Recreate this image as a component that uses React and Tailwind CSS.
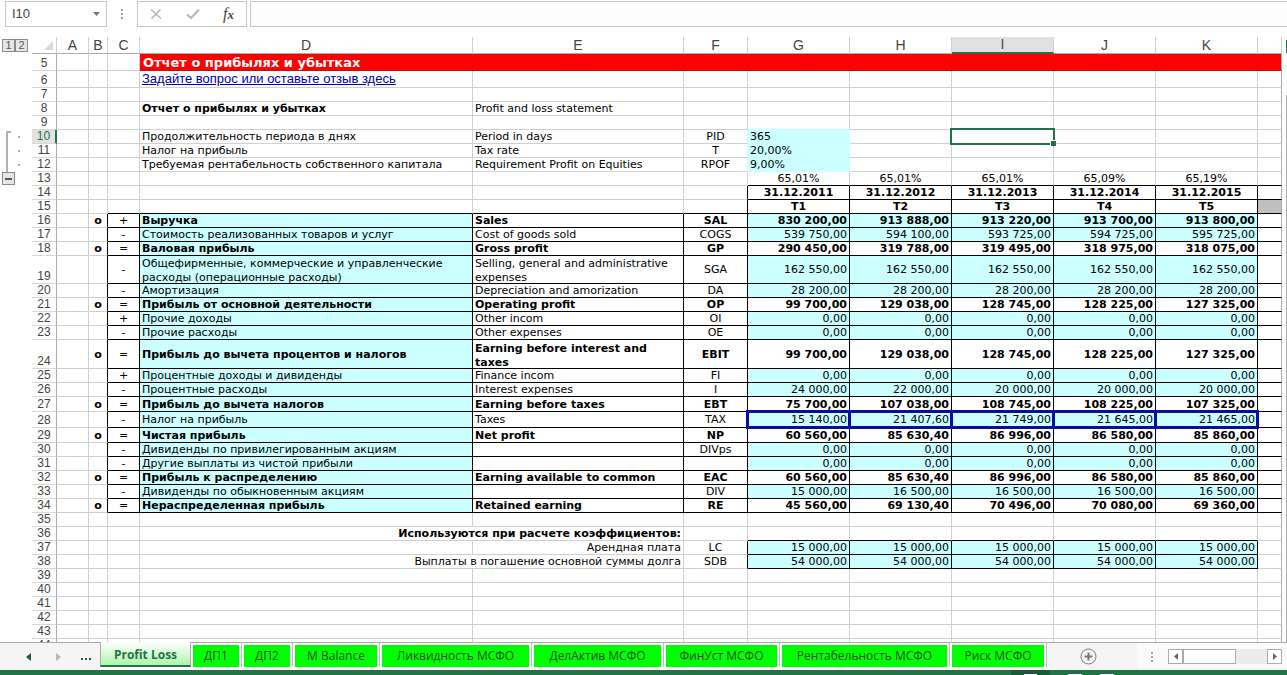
import clsx from 'clsx';

const COLUMNS = [
    { id: 'A', width: 'w-[32px]' },
    { id: 'B', width: 'w-[19px]' },
    { id: 'C', width: 'w-[32px]' },
    { id: 'D', width: 'w-[333px]' },
    { id: 'E', width: 'w-[211px]' },
    { id: 'F', width: 'w-[64px]' },
    { id: 'G', width: 'w-[102px]' },
    { id: 'H', width: 'w-[102px]' },
    { id: 'I', width: 'w-[102px]' },
    { id: 'J', width: 'w-[102px]' },
    { id: 'K', width: 'w-[102px]' },
    { id: 'L', width: '' },
];

const YEARS = ['G', 'H', 'I', 'J', 'K'];

// n: row number, s: sign, d / e: names, f: code, v: values for G..K
const ROWS = [
    { n: 5, h: 'h-[17px]' },
    { n: 6, h: 'h-[17px]' },
    { n: 7 },
    { n: 8, d: 'Отчет о прибылях и убытках', e: 'Profit and loss statement' },
    { n: 9 },
    { n: 10, d: 'Продолжительность периода в днях', e: 'Period in days', f: 'PID', v: ['365'] },
    { n: 11, d: 'Налог на прибыль', e: 'Tax rate', f: 'T', v: ['20,00%'] },
    { n: 12, d: 'Требуемая рентабельность собственного капитала', e: 'Requirement Profit on Equities', f: 'RPOF', v: ['9,00%'] },
    { n: 13, v: ['65,01%', '65,01%', '65,01%', '65,09%', '65,19%'] },
    { n: 14, bold: true, v: ['31.12.2011', '31.12.2012', '31.12.2013', '31.12.2014', '31.12.2015'] },
    { n: 15, bold: true, v: ['T1', 'T2', 'T3', 'T4', 'T5'] },
    { n: 16, bold: true, s: '+', d: 'Выручка', e: 'Sales', f: 'SAL', v: ['830 200,00', '913 888,00', '913 220,00', '913 700,00', '913 800,00'] },
    { n: 17, s: '-', d: 'Стоимость реализованных товаров и услуг', e: 'Cost of goods sold', f: 'COGS', v: ['539 750,00', '594 100,00', '593 725,00', '594 725,00', '595 725,00'] },
    { n: 18, bold: true, s: '=', d: 'Валовая прибыль', e: 'Gross profit', f: 'GP', v: ['290 450,00', '319 788,00', '319 495,00', '318 975,00', '318 075,00'] },
    { n: 19, h: 'h-[28px]', s: '-', d: 'Общефирменные, коммерческие и управленческие\nрасходы (операционные расходы)', e: 'Selling, general and administrative\nexpenses', f: 'SGA', v: ['162 550,00', '162 550,00', '162 550,00', '162 550,00', '162 550,00'] },
    { n: 20, s: '-', d: 'Амортизация', e: 'Depreciation and amorization', f: 'DA', v: ['28 200,00', '28 200,00', '28 200,00', '28 200,00', '28 200,00'] },
    { n: 21, bold: true, s: '=', d: 'Прибыль от основной деятельности', e: 'Operating profit', f: 'OP', v: ['99 700,00', '129 038,00', '128 745,00', '128 225,00', '127 325,00'] },
    { n: 22, s: '+', d: 'Прочие доходы', e: 'Other incom', f: 'OI', v: ['0,00', '0,00', '0,00', '0,00', '0,00'] },
    { n: 23, s: '-', d: 'Прочие расходы', e: 'Other expenses', f: 'OE', v: ['0,00', '0,00', '0,00', '0,00', '0,00'] },
    { n: 24, h: 'h-[29px]', bold: true, s: '=', d: 'Прибыль до вычета процентов и налогов', e: 'Earning before interest and\ntaxes', f: 'EBIT', v: ['99 700,00', '129 038,00', '128 745,00', '128 225,00', '127 325,00'] },
    { n: 25, s: '+', d: 'Процентные доходы и дивиденды', e: 'Finance incom', f: 'FI', v: ['0,00', '0,00', '0,00', '0,00', '0,00'] },
    { n: 26, s: '-', d: 'Процентные расходы', e: 'Interest expenses', f: 'I', v: ['24 000,00', '22 000,00', '20 000,00', '20 000,00', '20 000,00'] },
    { n: 27, h: 'h-[15px]', bold: true, s: '=', d: 'Прибыль до вычета налогов', e: 'Earning before taxes', f: 'EBT', v: ['75 700,00', '107 038,00', '108 745,00', '108 225,00', '107 325,00'] },
    { n: 28, h: 'h-[16px]', s: '-', d: 'Налог на прибыль', e: 'Taxes', f: 'TAX', v: ['15 140,00', '21 407,60', '21 749,00', '21 645,00', '21 465,00'] },
    { n: 29, h: 'h-[15px]', bold: true, s: '=', d: 'Чистая прибыль', e: 'Net profit', f: 'NP', v: ['60 560,00', '85 630,40', '86 996,00', '86 580,00', '85 860,00'] },
    { n: 30, s: '-', d: 'Дивиденды по привилегированным акциям', f: 'DIVps', v: ['0,00', '0,00', '0,00', '0,00', '0,00'] },
    { n: 31, s: '-', d: 'Другие выплаты из чистой прибыли', v: ['0,00', '0,00', '0,00', '0,00', '0,00'] },
    { n: 32, bold: true, s: '=', d: 'Прибыль к распределению', e: 'Earning available to common', f: 'EAC', v: ['60 560,00', '85 630,40', '86 996,00', '86 580,00', '85 860,00'] },
    { n: 33, s: '-', d: 'Дивиденды по обыкновенным акциям', f: 'DIV', v: ['15 000,00', '16 500,00', '16 500,00', '16 500,00', '16 500,00'] },
    { n: 34, bold: true, s: '=', d: 'Нераспределенная прибыль', e: 'Retained earning', f: 'RE', v: ['45 560,00', '69 130,40', '70 496,00', '70 080,00', '69 360,00'] },
    { n: 35 },
    { n: 36, wide: 'Используются при расчете коэффициентов:' },
    { n: 37, e: 'Арендная плата', f: 'LC', v: ['15 000,00', '15 000,00', '15 000,00', '15 000,00', '15 000,00'] },
    { n: 38, wide: 'Выплаты в погашение основной суммы долга', f: 'SDB', v: ['54 000,00', '54 000,00', '54 000,00', '54 000,00', '54 000,00'] },
    { n: 39 },
    { n: 40 },
    { n: 41 },
    { n: 42 },
    { n: 43 },
    { n: 44 },
];

const TABS = [
    { name: 'ДП1', width: 'w-[46px]' },
    { name: 'ДП2', width: 'w-[46px]' },
    { name: 'M Balance', width: 'w-[82px]' },
    { name: 'Ликвидность МСФО', width: 'w-[147px]' },
    { name: 'ДелАктив МСФО', width: 'w-[127px]' },
    { name: 'ФинУст МСФО', width: 'w-[111px]' },
    { name: 'Рентабельность МСФО', width: 'w-[165px]' },
    { name: 'Риск МСФО', width: 'w-[92px]' },
];

const between = (n, a, b) => n >= a && n <= b;

function cellText(row, col) {
    if (col === 'B') return row.bold && between(row.n, 16, 34) ? 'o' : '';
    if (col === 'C') return row.s;
    if (col === 'D') return row.d;
    if (col === 'E') return row.e;
    if (col === 'F') return row.f;
    return row.v?.[YEARS.indexOf(col)];
}

function isFilled(row, col) {
    const { n } = row;
    if (between(n, 10, 12)) return col === 'G';
    if (between(n, 16, 34)) return col === 'D' || (YEARS.includes(col) && (n === 16 || !row.bold));
    return between(n, 37, 38) && YEARS.includes(col);
}

function isBold(row, col) {
    if (row.n === 8) return col === 'D';
    if (row.n === 36) return true;
    return row.bold && col !== 'C';
}

function rightLine({ n }, col) {
    const isYear = YEARS.includes(col);
    if (between(n, 10, 12) && (col === 'F' || col === 'G')) return 'border-r-[#ccffff]';
    if (between(n, 16, 34) && col !== 'A' && col !== 'L') return 'border-r-black';
    if ((between(n, 14, 15) || between(n, 37, 38)) && (isYear || col === 'F')) return 'border-r-black';
    if (between(n, 37, 38) && col === 'E') return 'border-r-[#d0d0d0]';
    if (col === 'L') return 'border-r-[#ababab]';
    return 'border-r-[#d0d0d0]';
}

function bottomLine({ n }, col) {
    const isYear = YEARS.includes(col);
    if (between(n, 9, 12) && col === 'G') return 'border-b-[#ccffff]';
    if (between(n, 13, 14) && (isYear || col === 'L')) return 'border-b-black';
    if (between(n, 15, 34) && col !== 'A' && col !== 'B') return 'border-b-black';
    if (between(n, 36, 38) && isYear) return 'border-b-black';
    return 'border-b-[#d0d0d0]';
}

function alignment({ n }, col) {
    if (col === 'D') return 'text-left';
    if (col === 'E') return n === 37 ? 'text-right' : 'text-left';
    if (YEARS.includes(col)) {
        if (between(n, 10, 12)) return 'text-left';
        return n >= 16 ? 'text-right' : 'text-center';
    }
    return 'text-center';
}

function Cell({ row, col, span, children }) {
    return (
        <td
            colSpan={span}
            className={clsx(
                'relative border-r border-b px-[2px] pt-px pb-0 align-middle whitespace-pre',
                rightLine(row, col),
                bottomLine(row, col),
                span ? 'text-right' : alignment(row, col),
                isBold(row, col) && 'font-bold',
                isFilled(row, col) && 'bg-[#ccffff]',
                row.n === 15 && col === 'L' && 'bg-[#c0c0c0]',
            )}
        >
            {children}
            {row.n === 28 && YEARS.includes(col) && (
                <span className="absolute -inset-[2px] z-10 border-[3px] border-[#0a0aa8]"></span>
            )}
            {row.n === 10 && col === 'I' && (
                <span className="absolute -inset-[2px] z-10 border-2 border-[#217346]">
                    <span className="absolute -right-[3px] -bottom-[3px] size-[6px] border-t border-l border-white bg-[#217346]"></span>
                </span>
            )}
        </td>
    );
}

function Row({ row }) {
    const active = row.n === 10;
    let cols = COLUMNS.map((c) => c.id);
    if (row.n === 5) cols = ['A', 'B', 'C'];
    if (row.wide) cols = cols.filter((c) => c !== 'E');

    return (
        <tr className={row.h || 'h-[14px]'}>
            <th
                scope="row"
                className={clsx(
                    'border-r border-b border-b-[#d8d8d8] p-0 pb-px text-center align-bottom font-["Liberation_Sans",sans-serif] text-[12px] leading-[12px] font-normal',
                    active ? 'border-r-2 border-r-[#217346] bg-[#e1e1e1] text-[#217346]' : 'border-r-[#ababab] text-[#444]',
                )}
            >
                {row.n}
            </th>
            {cols.map((col) => {
                const text = cellText(row, col);
                if (row.wide && col === 'D') return <Cell key={col} row={row} col="E" span={2}>{row.wide}</Cell>;
                if (row.n === 6 && col === 'D') {
                    return (
                        <Cell key={col} row={row} col={col}>
                            <a href="#feedback" className='font-["Liberation_Sans",sans-serif] text-[13px] text-[#0000a8] underline'>
                                Задайте вопрос или оставьте отзыв здесь
                            </a>
                        </Cell>
                    );
                }
                if (text?.includes('\n')) {
                    return (
                        <Cell key={col} row={row} col={col}>
                            <div className="h-[26px] leading-[14px]">{text}</div>
                        </Cell>
                    );
                }
                return <Cell key={col} row={row} col={col}>{text}</Cell>;
            })}
            {row.n === 5 && (
                <td colSpan={9} className="border-r border-b border-r-[#ababab] border-b-[#c01020] bg-[#ff0000] px-[3px] pt-px pb-0 text-[13px] leading-[15px] font-bold text-white">
                    Отчет о прибылях и убытках
                </td>
            )}
        </tr>
    );
}

function Dots() {
    return (
        <span className="flex flex-col gap-[2px]">
            <span className="size-[2px] bg-[#a0a0a0]"></span>
            <span className="size-[2px] bg-[#a0a0a0]"></span>
            <span className="size-[2px] bg-[#a0a0a0]"></span>
        </span>
    );
}

function FormulaBar() {
    return (
        <div className="flex h-[37px] shrink-0 items-start pt-px pl-[5px] text-[#444]">
            <div className="flex h-[26px] w-[102px] items-center border border-[#c6c6c6] pr-[5px]">
                <input aria-label="Name box" defaultValue="I10" className="w-full min-w-0 pl-[6px] text-[13px] outline-none" />
                <button aria-label="Open names">
                    <svg width="9" height="5" viewBox="0 0 9 5" fill="#777"><path d="M1 0H8L4.500 4Z" /></svg>
                </button>
            </div>
            <div className="flex h-[26px] w-[30px] items-center justify-center">
                <Dots />
            </div>
            <div className="mr-[3px] flex h-[26px] w-[110px] items-center justify-between border border-[#c6c6c6] px-[12px]">
                <button aria-label="Cancel">
                    <svg width="12" height="12" viewBox="0 0 12 12" fill="none" stroke="#b8b8b8" strokeWidth="1.6"><path d="M1 1.500L11 10.500M10.500 1.500L1.500 10.500" /></svg>
                </button>
                <button aria-label="Enter">
                    <svg width="14" height="12" viewBox="0 0 14 12" fill="none" stroke="#b8b8b8" strokeWidth="2.2"><path d="M1 6.500L5 10L13 1.500" /></svg>
                </button>
                <button aria-label="Insert function" className='font-["Liberation_Serif",serif] text-[16px] leading-[20px] italic'>
                    f<span className="text-[13px] font-bold">x</span>
                </button>
            </div>
            <input aria-label="Formula" className="h-[26px] min-w-0 flex-1 border border-r-0 border-[#c6c6c6] bg-[#fdfdfd] px-1 text-[13px] outline-none" />
        </div>
    );
}

function Outline() {
    return (
        <div className="w-[32px] shrink-0 pt-[2px] pl-[2px]">
            <div className="flex">
                {['1', '2'].map((level) => (
                    <button key={level} className="size-[13px] border border-[#8a8a8a] bg-[#e6e6e6] text-[11px] leading-[11px] text-[#555]">
                        {level}
                    </button>
                ))}
            </div>
            <div className="mt-[79px] flex h-[41px] pl-[4px]">
                <div className="w-[5px] border-t-2 border-l-2 border-[#b0b0b0]"></div>
                <div className="flex flex-col gap-[12px] pt-[5px] pl-[7px]">
                    <span className="size-[2px] bg-[#b0b0b0]"></span>
                    <span className="size-[2px] bg-[#b0b0b0]"></span>
                    <span className="size-[2px] bg-[#b0b0b0]"></span>
                </div>
            </div>
            <button aria-label="Collapse rows" className="flex size-[13px] items-center justify-center border border-[#8a8a8a] bg-[#e6e6e6]">
                <span className="h-[2px] w-[7px] bg-[#555]"></span>
            </button>
        </div>
    );
}

function Sheet() {
    return (
        <table className='w-full table-fixed border-separate border-spacing-0 font-["DejaVu_Sans",Verdana,sans-serif] text-[11px] leading-[12px] text-black'>
            <colgroup>
                <col className="w-[25px]" />
                {COLUMNS.map((c) => <col key={c.id} className={c.width} />)}
            </colgroup>
            <thead>
                <tr className='h-[17px] font-["Liberation_Sans",sans-serif] text-[14px] leading-[15px] text-[#444]'>
                    <td className="border-r border-b border-r-[#d0d0d0] border-b-[#ababab] p-0">
                        <svg className="ml-auto mr-[3px]" width="9" height="9" viewBox="0 0 9 9" fill="#d8d8d8"><path d="M9 0V9H0Z" /></svg>
                    </td>
                    {COLUMNS.map(({ id }) => (
                        <th
                            key={id}
                            scope="col"
                            className={clsx(
                                'border-r border-r-[#d0d0d0] p-0 font-normal',
                                id === 'I' ? 'border-b-2 border-b-[#217346] bg-[#e1e1e1]' : 'border-b border-b-[#ababab]',
                            )}
                        >
                            {id === 'L' ? '' : id}
                        </th>
                    ))}
                </tr>
            </thead>
            <tbody>
                {ROWS.map((row) => <Row key={row.n} row={row} />)}
            </tbody>
        </table>
    );
}

function SheetTabs() {
    return (
        <div className='flex h-[28px] shrink-0 border-t border-[#ababab] bg-[#f5f5f5] font-["Open_Sans",sans-serif] text-[12px] text-[#1d4d1d]'>
            <div className="flex w-[100px] items-center pl-[26px]">
                <button aria-label="Previous sheets">
                    <svg width="5" height="8" viewBox="0 0 5 8" fill="#1e5c3a"><path d="M5 0V8L0 4Z" /></svg>
                </button>
                <button aria-label="Next sheets" className="ml-[25px]">
                    <svg width="5" height="8" viewBox="0 0 5 8" fill="#b8b8b8"><path d="M0 0V8L5 4Z" /></svg>
                </button>
                <button aria-label="More sheets" className="ml-[20px] flex gap-[2px] pt-[4px]">
                    <span className="size-[2px] bg-[#1e5c3a]"></span>
                    <span className="size-[2px] bg-[#1e5c3a]"></span>
                    <span className="size-[2px] bg-[#1e5c3a]"></span>
                </button>
            </div>
            <div className="flex items-start bg-white">
                <button className="-mt-px h-[25px] w-[91px] border-x border-b-2 border-x-[#ababab] border-b-[#217346] bg-linear-to-b from-white to-[#a9f5a9] pt-[3px] font-bold text-[#217346]">
                    Profit Loss
                </button>
                {TABS.map((tab) => (
                    <div key={tab.name} className="flex items-center border-r border-[#b8c8b8] px-[2px] pt-[2px]">
                        <button className={clsx('h-[22px] bg-[#00ff00]', tab.width)}>{tab.name}</button>
                    </div>
                ))}
            </div>
            <div className="flex w-[90px] items-center justify-center pr-[8px]">
                <button aria-label="New sheet">
                    <svg width="17" height="17" viewBox="0 0 17 17" fill="none" stroke="#777"><circle cx="8.500" cy="8.500" r="7.500" /><path d="M8.500 4.500V12.500M4.500 8.500H12.500" strokeWidth="2" /></svg>
                </button>
            </div>
            <div className="flex flex-1 items-center justify-end bg-[#fafafa] pr-[5px]">
                <Dots />
                <div className="ml-[15px] flex h-[15px] w-[114px]">
                    <button aria-label="Scroll left" className="flex w-[15px] items-center justify-center border border-[#ababab] bg-white">
                        <svg width="4" height="7" viewBox="0 0 4 7" fill="#666"><path d="M4 0V7L0 3.500Z" /></svg>
                    </button>
                    <div className="flex-1 bg-[#ececec]">
                        <div className="h-full w-[53px] border border-[#ababab] bg-white"></div>
                    </div>
                    <button aria-label="Scroll right" className="flex w-[15px] items-center justify-center border border-[#ababab] bg-white">
                        <svg width="4" height="7" viewBox="0 0 4 7" fill="#666"><path d="M0 0V7L4 3.500Z" /></svg>
                    </button>
                </div>
            </div>
        </div>
    );
}

export default function App() {
    return (
        <div className='flex h-screen flex-col overflow-hidden bg-white font-["Liberation_Sans",sans-serif]'>
            <FormulaBar />
            <div className="flex min-h-0 flex-1 overflow-hidden">
                <Outline />
                <div className="min-w-0 flex-1 overflow-hidden">
                    <Sheet />
                </div>
                <div className="flex w-[5px] shrink-0 flex-col items-end pt-[3px]">
                    <div className="h-[13px] w-px bg-[#217346]"></div>
                    <div className="mt-[42px] w-px flex-1 bg-[#ababab]"></div>
                </div>
            </div>
            <SheetTabs />
            <div className="flex h-[5px] shrink-0 justify-end bg-[#217346] pr-[173px]">
                <div className="flex w-[103px] items-end justify-between">
                    <div className="flex h-full w-[39px] items-end justify-center bg-[#185c37]">
                        <span className="h-px w-[13px] bg-white"></span>
                    </div>
                    <span className="h-px w-[14px] bg-white"></span>
                    <span className="h-px w-[14px] bg-white"></span>
                </div>
            </div>
        </div>
    );
}
